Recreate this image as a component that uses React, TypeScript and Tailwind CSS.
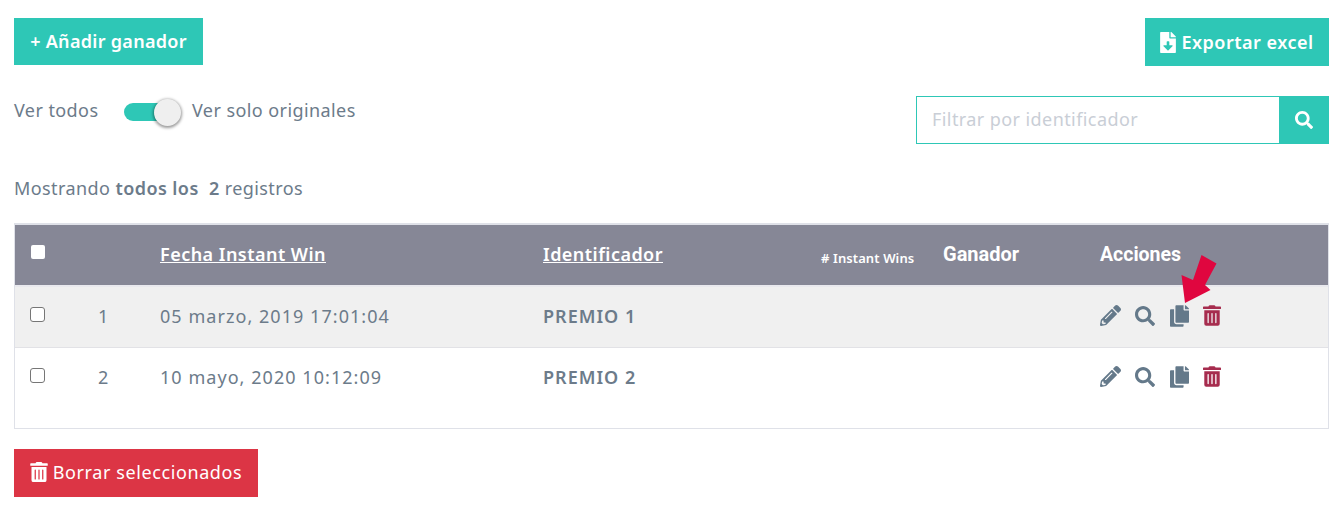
import React from 'react';
import { FaFileDownload, FaSearch, FaPencilAlt, FaCopy, FaTrashAlt } from 'react-icons/fa';

const rows = [
  { n: 1, date: '05 marzo, 2019 17:01:04', id: 'PREMIO 1' },
  { n: 2, date: '10 mayo, 2020 10:12:09', id: 'PREMIO 2' },
];

const Actions = ({ arrow }: { arrow?: boolean }) => (
  <div className="relative flex items-center h-[22px] mb-[2px] text-[#64798a]">
    <FaPencilAlt className="w-[21px] h-[21px]" />
    <FaSearch className="w-[20px] h-[20px] ml-[14px]" />
    <FaCopy className="w-[19px] h-[22px] ml-[15px]" />
    <FaTrashAlt className="w-[18px] h-[21px] ml-[14px] text-[#a62c4e]" />
    {arrow && (
      <svg className="absolute left-[78px] top-[-52px] w-[40px] h-[52px]" viewBox="0 0 40 52">
        <polygon points="7,50 3.5,22 15,27 23.5,2 38.5,10.5 27,32 32.5,37" fill="#e0063f" />
      </svg>
    )}
  </div>
);

export default function App() {
  return (
    <div className="w-[1333px] h-[515px] overflow-hidden bg-white pl-[14px] pr-[4px] pt-[18px] font-['Noto_Sans',sans-serif] text-[#6c7b8a] text-[18px] tracking-[0.42px]">
      <div className="flex justify-between items-start">
        <button className="h-[47px] w-[189px] bg-[#2ec7b6] text-white font-semibold text-[18px] tracking-[0.3px]">+ Añadir ganador</button>
        <button className="h-[48px] w-[184px] bg-[#2ec7b6] text-white font-semibold text-[18px] tracking-[0.5px] flex items-center justify-center gap-[5px]">
          <FaFileDownload className="w-[16px] h-[21px]" />
          Exportar excel
        </button>
      </div>

      <div className="flex justify-between items-start mt-[30px]">
        <div className="flex items-center h-[28px]">
          <span className="w-[110px]">Ver todos</span>
          <div className="relative w-[50px] h-[18px] mt-[3px] rounded-full bg-[#2ec7b6]">
            <div className="absolute right-[-7px] top-[-4px] w-[27px] h-[27px] rounded-full bg-[#efefef] shadow-[0_1px_3px_1px_rgba(0,0,0,0.4)]" />
          </div>
          <span className="ml-[18px]">Ver solo originales</span>
        </div>
        <div className="flex w-[413px] h-[48px] border border-[#2ec7b6]">
          <div className="flex-1 flex items-center pl-[15px] pb-[2px] text-[#c9ced6]">Filtrar por identificador</div>
          <div className="w-[49px] bg-[#2ec7b6] flex items-center justify-center text-white">
            <FaSearch className="w-[18px] h-[18px]" />
          </div>
        </div>
      </div>

      <div className="mt-[30px] h-[28px] flex items-center whitespace-pre">
        Mostrando <b className="font-semibold">todos los  2</b> registros
      </div>

      <div className="mt-[21px] w-[1315px] h-[206px] border-x border-b border-t-2 border-[#dfe1e8]">
        <table className="w-full table-fixed border-collapse">
          <colgroup>
            <col className="w-[70px]" />
            <col className="w-[60px]" />
            <col className="w-[383px]" />
            <col className="w-[278px]" />
            <col className="w-[122px]" />
            <col className="w-[157px]" />
            <col />
          </colgroup>
          <thead>
            <tr className="h-[61px] bg-[#868796] text-white text-left border-b-2 border-[#e9e9ee]">
              <th className="pl-[15px] pb-[7px]">
                <div className="w-[14px] h-[14px] ml-[1px] rounded-[2px] bg-white" />
              </th>
              <th />
              <th className="pl-[15px] pb-[2px] font-semibold underline tracking-[0.47px]">Fecha Instant Win</th>
              <th className="pl-[15px] pb-[2px] font-semibold underline tracking-[0.47px]">Identificador</th>
              <th className="pl-[15px] font-semibold text-[13px] tracking-[0.1px] pt-[7px]">
                <span className="whitespace-nowrap"># Instant Wins</span>
              </th>
              <th className="pl-[15px] font-bold font-['Roboto',sans-serif] text-[20px] tracking-normal pb-[2px]">Ganador</th>
              <th className="pl-[15px] font-bold font-['Roboto',sans-serif] text-[19.5px] tracking-normal">Acciones</th>
            </tr>
          </thead>
          <tbody>
            {rows.map((r, i) => (
              <tr key={r.n} className={i === 0 ? 'h-[61px] bg-[#f0f0f0] border-b border-[#e2e2e6]' : 'h-[61px]'}>
                <td className="pl-[15px] pb-[4px]">
                  <div className="w-[15px] h-[15px] rounded-[3px] border border-[#767676] bg-white" />
                </td>
                <td className="pl-[13px]">{r.n}</td>
                <td className="pl-[15px] whitespace-nowrap tracking-[1.05px]">{r.date}</td>
                <td className="pl-[15px] font-semibold tracking-[1px]">{r.id}</td>
                <td />
                <td />
                <td className="pl-[15px]">
                  <Actions arrow={i === 0} />
                </td>
              </tr>
            ))}
          </tbody>
        </table>
      </div>

      <button className="mt-[20px] h-[48px] w-[244px] pb-[2px] bg-[#dc3545] text-white text-[18px] tracking-[0.6px] flex items-center justify-center gap-[5px]">
        <FaTrashAlt className="w-[18px] h-[20px]" />
        Borrar seleccionados
      </button>
    </div>
  );
}
